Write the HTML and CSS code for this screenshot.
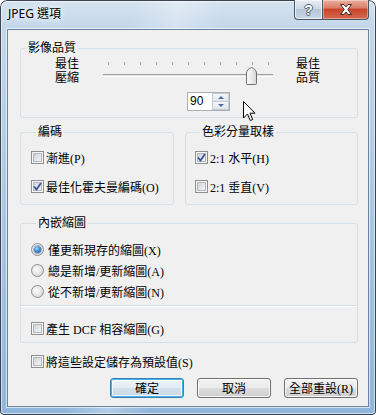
FILE: index.html
```html
<!DOCTYPE html>
<html lang="zh-Hant">
<head>
  <meta charset="utf-8">
  <title>JPEG 選項</title>
  <link rel="stylesheet" href="styles.css">
</head>
<body>
  <div class="window">
    <div class="titlebar">
      <span class="title">JPEG 選項</span>
      <div class="caption-buttons">
        <button class="cap-btn cap-help">?</button>
        <button class="cap-btn cap-close">
          <svg width="14" height="11" viewBox="0 0 14 11">
            <path d="M1.5 0.5 H5 L7 3 L9 0.5 H12.5 L8.8 5.5 L12.5 10.5 H9 L7 8 L5 10.5 H1.5 L5.2 5.5 Z" fill="#fff" stroke="#4a2a24" stroke-width="1"/>
          </svg>
        </button>
      </div>
    </div>

    <div class="client">
      <fieldset class="group group-quality">
        <legend>影像品質</legend>
        <div class="quality-row">
          <div class="quality-label low">最佳<br>壓縮</div>
          <div class="slider">
            <div class="ticks">
              <i></i><i></i><i></i><i></i><i></i><i></i><i></i><i></i><i></i><i></i><i></i>
            </div>
            <div class="track"></div>
            <!-- value 90 of 0..100 -->
            <svg class="thumb" style="left: 143px" width="11" height="18" viewBox="0 0 11 18">
              <defs>
                <linearGradient id="thumbFill" x1="0" y1="0" x2="1" y2="0">
                  <stop offset="0" stop-color="#fbfbfb"/>
                  <stop offset="0.5" stop-color="#ececec"/>
                  <stop offset="1" stop-color="#d4d4d4"/>
                </linearGradient>
              </defs>
              <path d="M0.5 16.5 V6 C0.5 3.5 3 1.2 5.5 0.5 C8 1.2 10.5 3.5 10.5 6 V16.5 Q10.5 17.5 9.5 17.5 H1.5 Q0.5 17.5 0.5 16.5 Z" fill="url(#thumbFill)" stroke="#707070"/>
            </svg>
          </div>
          <div class="quality-label high">最佳<br>品質</div>
        </div>
        <div class="spin">
          <span class="spin-value">90</span>
          <span class="spin-buttons">
            <span class="spin-btn"><i class="arrow-up"></i></span>
            <span class="spin-btn"><i class="arrow-down"></i></span>
          </span>
        </div>
      </fieldset>

      <div class="group-row">
        <fieldset class="group group-encode">
          <legend>編碼</legend>
          <div class="check"><span class="box"></span>漸進(P)</div>
          <div class="check">
            <span class="box"><svg width="9" height="9" viewBox="0 0 9 9"><path d="M1 4.5 L3.5 7.5 L8 1" fill="none" stroke="#3a56a0" stroke-width="1.8"/></svg></span>最佳化霍夫曼編碼(O)
          </div>
        </fieldset>
        <fieldset class="group group-chroma">
          <legend>色彩分量取樣</legend>
          <div class="check">
            <span class="box"><svg width="9" height="9" viewBox="0 0 9 9"><path d="M1 4.5 L3.5 7.5 L8 1" fill="none" stroke="#3a56a0" stroke-width="1.8"/></svg></span>2:1 水平(H)
          </div>
          <div class="check"><span class="box"></span>2:1 垂直(V)</div>
        </fieldset>
      </div>

      <fieldset class="group group-thumb">
        <legend>內嵌縮圖</legend>
        <div class="radios">
          <div class="check"><span class="radio on"></span>僅更新現存的縮圖(X)</div>
          <div class="check"><span class="radio"></span>總是新增/更新縮圖(A)</div>
          <div class="check"><span class="radio"></span>從不新增/更新縮圖(N)</div>
        </div>
        <div class="separator"></div>
        <div class="check dcf"><span class="box"></span>產生 DCF 相容縮圖(G)</div>
      </fieldset>

      <div class="check save"><span class="box"></span>將這些設定儲存為預設值(S)</div>

      <div class="buttons">
        <button class="btn default">確定</button>
        <button class="btn">取消</button>
        <button class="btn">全部重設(R)</button>
      </div>
    </div>

    <svg class="cursor" width="13" height="21" viewBox="0 0 13 21">
      <path d="M0.5 0.5 V17 L4.5 13 L7.3 19.5 L9.7 18.5 L7 12.2 H12 Z" fill="#fff" stroke="#000" stroke-linejoin="miter"/>
    </svg>
  </div>
</body>
</html>
```

FILE: styles.css
```css
* {
  box-sizing: border-box;
}

body {
  margin: 0;
  background: #fff;
  font-family: "Liberation Serif", "Noto Sans CJK TC", serif;
  font-size: 12px;
  color: #000;
}

.window {
  position: relative;
  width: 376px;
  height: 415px;
  display: flex;
  flex-direction: column;
  padding: 0 7px 8px;
  border-radius: 7px 7px 4px 4px;
  background:
    linear-gradient(100deg, rgba(255, 255, 255, 0) 30%, rgba(255, 255, 255, 0.3) 40%, rgba(255, 255, 255, 0) 50%),
    linear-gradient(180deg, #d6e3ef 0, #c3d7ea 28px, #a9c7e4 220px, #8fb6dc 100%);
  box-shadow: inset 0 0 0 1px #3a4450, inset 0 0 0 2px rgba(255, 255, 255, 0.55);
}

/* title bar */

.titlebar {
  height: 29px;
  display: flex;
  justify-content: space-between;
  align-items: flex-start;
}

.title {
  padding: 6px 0 0 1px;
  font-family: "Noto Sans", "Noto Sans CJK TC", sans-serif;
  font-size: 12px;
  line-height: 16px;
  text-shadow: 0 0 5px #fff, 0 0 9px #fff;
}

.caption-buttons {
  display: flex;
}

.cap-btn {
  height: 20px;
  padding: 0;
  display: flex;
  align-items: center;
  justify-content: center;
  border: 1px solid #4a5663;
  border-top: 0;
}

.cap-help {
  width: 28px;
  border-right: 0;
  border-radius: 0 0 0 4px;
  background: linear-gradient(#e6ecf2, #cfdae5 45%, #b7c7d8 50%, #c9d7e5 100%);
  box-shadow: inset 0 0 0 1px rgba(255, 255, 255, 0.6);
  color: #fff;
  font-family: "Liberation Sans", sans-serif;
  font-weight: bold;
  font-size: 14px;
  text-shadow: -1px 0 #4d5966, 1px 0 #4d5966, 0 -1px #4d5966, 0 1px #4d5966;
}

.cap-close {
  width: 47px;
  border-radius: 0 0 4px 0;
  background: linear-gradient(#eab0a2, #dc7e68 40%, #c8462d 50%, #d46a4f 100%);
  box-shadow: inset 0 0 0 1px rgba(255, 255, 255, 0.35);
}

/* client area */

.client {
  flex: 1;
  display: flex;
  flex-direction: column;
  padding: 0 10px 8px 12px;
  background: #f0f0f0;
  border: 1px solid #6a839e;
  box-shadow: 0 0 0 1px rgba(255, 255, 255, 0.6);
}

.group {
  margin: 0;
  padding: 0;
  min-width: 0;
  border: 1px solid #d5dfe5;
  border-radius: 3px;
}

.group legend {
  margin-left: 5px;
  padding: 0 2px;
  height: 14px;
  line-height: 14px;
}

.group-quality {
  margin-top: 11px;
  padding: 3px 0 6px;
}

.quality-row {
  display: flex;
  height: 27px;
}

.quality-label {
  width: 24px;
  line-height: 13.5px;
}

.quality-label.low {
  margin-left: 34px;
}

.quality-label.high {
  margin-left: 23px;
}

.slider {
  position: relative;
  width: 170px;
  margin-left: 24px;
}

.ticks {
  display: flex;
  gap: 15px;
  height: 3px;
  margin: 4px 0 0 5px;
}

.ticks i {
  width: 1px;
  background: #a3a3a3;
}

.track {
  height: 3px;
  margin-top: 9px;
  border-top: 1px solid #a0a0a0;
  border-bottom: 1px solid #fff;
  background: #e3e3e3;
}

.thumb {
  position: absolute;
  top: 9px;
}

.spin {
  display: flex;
  width: 43px;
  height: 19px;
  margin: 7px 0 0 166px;
  border: 1px solid #abadb3;
  background: #fff;
}

.spin-value {
  flex: 1;
  padding-left: 2px;
  font-family: "Liberation Sans", sans-serif;
  font-size: 12px;
  line-height: 17px;
}

.spin-buttons {
  width: 17px;
  display: flex;
  flex-direction: column;
}

.spin-btn {
  flex: 1;
  display: flex;
  align-items: center;
  justify-content: center;
  border: 1px solid #c3cbd4;
  background: linear-gradient(#f5f7f9, #dfe5eb);
}

.spin-btn + .spin-btn {
  border-top: 0;
}

.arrow-up {
  border: 3px solid transparent;
  border-top: 0;
  border-bottom: 3px solid #4a6fa5;
}

.arrow-down {
  border: 3px solid transparent;
  border-bottom: 0;
  border-top: 3px solid #4a6fa5;
}

/* encoding + chroma */

.group-row {
  display: flex;
  gap: 11px;
  margin-top: 7px;
}

.group-encode,
.group-chroma {
  display: flex;
  flex-direction: column;
  gap: 12px;
  padding: 10px 0 9px 10px;
}

.group-encode {
  width: 154px;
}

.group-chroma {
  width: 173px;
  padding-left: 9px;
}

.check {
  display: flex;
  align-items: center;
  height: 17px;
  white-space: nowrap;
}

.box {
  width: 13px;
  height: 13px;
  margin-right: 2px;
  display: flex;
  align-items: center;
  justify-content: center;
  border: 1px solid #8e8f8f;
  background: linear-gradient(135deg, #c4c8ce 0%, #e6e7e9 55%, #fafafa 100%);
  box-shadow: inset 0 0 0 1px #f6f6f6, inset 0 0 0 2px #b3b8be;
}

.box svg {
  display: block;
}

.radio {
  position: relative;
  width: 13px;
  height: 13px;
  margin-right: 4px;
  border-radius: 50%;
  border: 1px solid #8e8f8f;
  background: radial-gradient(circle at 40% 40%, #fbfbfb 0, #e3e4e6 55%, #c9ccd0 100%);
  display: flex;
  align-items: center;
  justify-content: center;
}

.radio.on::after {
  content: "";
  width: 7px;
  height: 7px;
  border-radius: 50%;
  background: radial-gradient(circle at 40% 35%, #a9ddff 0, #3b8fd8 45%, #1b4f94 100%);
  box-shadow: 0 0 0 1px rgba(40, 80, 140, 0.35);
}

/* embedded thumbnail */

.group-thumb {
  margin-top: 11px;
  padding: 11px 0 5px 10px;
}

.radios {
  display: flex;
  flex-direction: column;
  gap: 4px;
}

.separator {
  height: 2px;
  margin: 5px 0 0 -10px;
  border-top: 1px solid #d5dfe5;
  border-bottom: 1px solid #fff;
}

.dcf {
  margin-top: 13px;
}

.save {
  margin: 10px 0 0 11px;
}

/* buttons */

.buttons {
  display: flex;
  justify-content: flex-end;
  gap: 13px;
  margin-top: 8px;
}

.btn {
  width: 74px;
  height: 20px;
  padding: 0;
  font: inherit;
  color: #000;
  border: 1px solid #707070;
  border-radius: 3px;
  background: linear-gradient(#f2f2f2 0, #ebebeb 50%, #dddddd 50%, #cfcfcf 100%);
  box-shadow: inset 0 0 0 1px rgba(255, 255, 255, 0.8);
}

.btn.default {
  border-color: #3c7fb1;
  background: linear-gradient(#eef4f9 0, #e3ecf4 50%, #d3e1ec 50%, #c9d9e6 100%);
  box-shadow: inset 0 0 0 1px #48b4ee, inset 0 0 0 2px rgba(255, 255, 255, 0.7);
}

.cursor {
  position: absolute;
  left: 243px;
  top: 101px;
}
```
